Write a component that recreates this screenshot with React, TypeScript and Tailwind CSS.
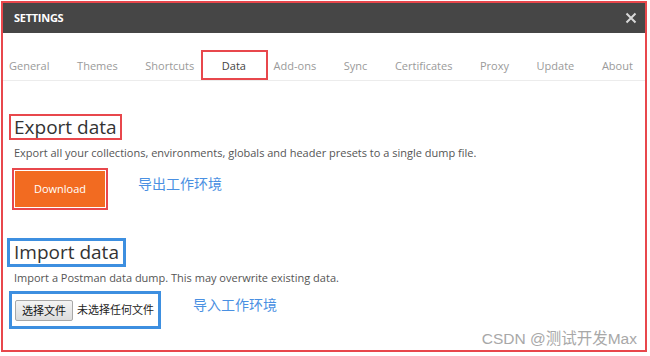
import React from "react";

const tabs = ["General", "Themes", "Shortcuts", "Data", "Add-ons", "Sync", "Certificates", "Proxy", "Update", "About"];

export default function App() {
  return (
    <div className="w-[650px] h-[356px] bg-white relative overflow-hidden" style={{ fontFamily: '"Open Sans", "Noto Sans CJK SC", sans-serif' }}>
      <div className="absolute left-[1px] top-[1px] w-[646px] h-[351px] border-2 border-[#e8474c] flex flex-col">
        <div className="h-[30px] shrink-0 bg-[#464646] flex items-center justify-between pl-[11px] pr-[5px]">
          <span className="text-white text-[11px] font-bold tracking-tight">SETTINGS</span>
          <svg width="12" height="12" viewBox="0 0 12 12" className="mr-[3px]">
            <path d="M1.5 1.5 L10.5 10.5 M10.5 1.5 L1.5 10.5" stroke="#d8d8d8" strokeWidth="2" />
          </svg>
        </div>
        <div className="h-[48px] shrink-0 flex items-end pb-[6px] pl-[6px] gap-[27.6px] border-b border-[#ececec]">
          {tabs.map((t) => (
            <span key={t} className={`relative shrink-0 whitespace-nowrap text-[11px] leading-[16px] ${t === "Data" ? "text-[#444]" : "text-[#9a9a9a]"}`}>
              {t}
              {t === "Data" && (
                <span className="absolute -left-[21px] -right-[22px] -top-[8px] -bottom-[6px] border-2 border-[#e8474c]" />
              )}
            </span>
          ))}
        </div>
        <div className="pl-[11px] pt-[33px]">
          <div className="inline-block border-2 border-[#e8474c] px-[3px] -ml-[5px] h-[26px]">
            <span className="text-[19px] leading-[22px] text-[#333] whitespace-nowrap">Export data</span>
          </div>
          <div className="text-[11px] text-[#555] mt-[5px] leading-[16px] whitespace-nowrap">
            Export all your collections, environments, globals and header presets to a single dump file.
          </div>
          <div className="flex items-center mt-[7px]">
            <div className="border-2 border-[#e8474c] p-[1px] -ml-[2px]">
              <div className="w-[90px] h-[36px] bg-[#f26b21] flex items-center justify-center text-white text-[11px]">Download</div>
            </div>
            <span className="ml-[30px] -mt-[12px] text-[14px] text-[#4a90e2] whitespace-nowrap">导出工作环境</span>
          </div>
          <div className="mt-[28px] inline-block border-[3px] border-[#3d8fe0] px-[4px] -ml-[7px] h-[29px]">
            <span className="text-[19px] leading-[22px] text-[#333] whitespace-nowrap">Import data</span>
          </div>
          <div className="text-[11px] text-[#555] mt-[3px] leading-[16px] whitespace-nowrap">
            Import a Postman data dump. This may overwrite existing data.
          </div>
          <div className="flex items-center mt-[5px]">
            <div className="border-[3px] border-[#3d8fe0] -ml-[5px] h-[38px] w-[152px] flex items-center pl-[3px] whitespace-nowrap">
              <span className="h-[21px] px-[6px] border border-[#a8a8a8] rounded-[2px] bg-gradient-to-b from-[#f4f4f4] to-[#dcdcdc] text-[11px] leading-[19px] text-[#111] shrink-0">选择文件</span>
              <span className="ml-[4px] text-[11px] text-[#222] shrink-0">未选择任何文件</span>
            </div>
            <span className="ml-[32px] -mt-[12px] text-[14px] text-[#4a90e2] whitespace-nowrap">导入工作环境</span>
          </div>
        </div>
        <div className="absolute right-[8px] bottom-[0px] text-[15.5px] text-[#a8a8a8] whitespace-nowrap" style={{ fontFamily: '"Liberation Sans", "Noto Sans CJK SC", sans-serif' }}>
          CSDN @测试开发Max
        </div>
      </div>
    </div>
  );
}
